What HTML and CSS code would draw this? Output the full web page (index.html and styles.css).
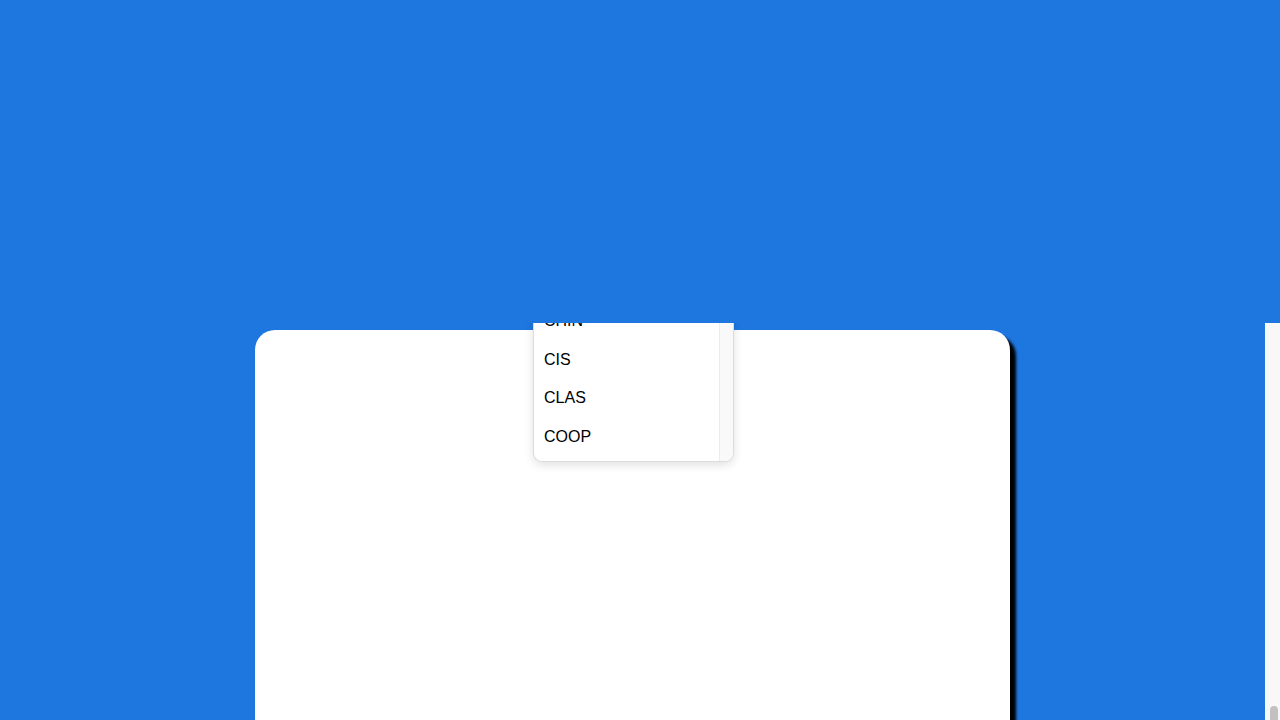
FILE: index.html
```html
<!DOCTYPE html>
<html lang="en">
<head>
<meta charset="utf-8">
<title>Select</title>
<link rel="stylesheet" href="styles.css">
</head>
<body>
<div class="top"></div>
<div class="viewport">
  <div class="pane">
    <div class="card">
      <div class="dropdown">
        <ul class="options">
          <li>CHIN</li>
          <li>CIS</li>
          <li>CLAS</li>
          <li>COOP</li>
        </ul>
        <div class="track"></div>
      </div>
    </div>
  </div>
  <div class="vscroll"><div class="thumb"></div></div>
</div>
</body>
</html>
```
FILE: styles.css
```css
html, body {
  margin: 0;
  padding: 0;
  height: 100%;
  overflow: hidden;
  background: #1e77df;
  font-family: "Liberation Sans", Arial, sans-serif;
}
.top {
  height: 323px;
  background: #1e77df;
}
.viewport {
  height: 397px;
  display: flex;
  background: #1e77df;
}
.pane {
  flex: 1;
  overflow: hidden;
  padding: 7px 0 0 255px;
}
.vscroll {
  flex: none;
  width: 14px;
  background: #f8f8f8;
  border-left: 1px solid #fdfdfd;
  display: flex;
  flex-direction: column;
  justify-content: flex-end;
  align-items: center;
}
.thumb {
  width: 8px;
  height: 14px;
  margin-left: 1px;
  background: #c1c1c1;
  border-radius: 4px 4px 0 0;
}
.card {
  position: relative;
  width: 755px;
  height: 390px;
  background: #fff;
  border-radius: 20px 20px 0 0;
  box-shadow: 6px 6px 3px #000;
}
.dropdown {
  position: absolute;
  top: -28px;
  left: 278px;
  width: 199px;
  display: flex;
  background: #fff;
  border: 1px solid #dcdcdc;
  border-top: none;
  border-radius: 0 0 9px 9px;
  box-shadow: 0 3px 10px rgba(0, 0, 0, 0.12);
  overflow: hidden;
}
.options {
  list-style: none;
  margin: 0;
  padding: 0 0 5px;
  flex: 1;
}
.options li {
  padding: 9px 10px;
  font-size: 16px;
  line-height: 20.5px;
  color: #000;
}
.track {
  flex: none;
  width: 13px;
  background: #f9f9f9;
  border-left: 1px solid #ececec;
}
```
